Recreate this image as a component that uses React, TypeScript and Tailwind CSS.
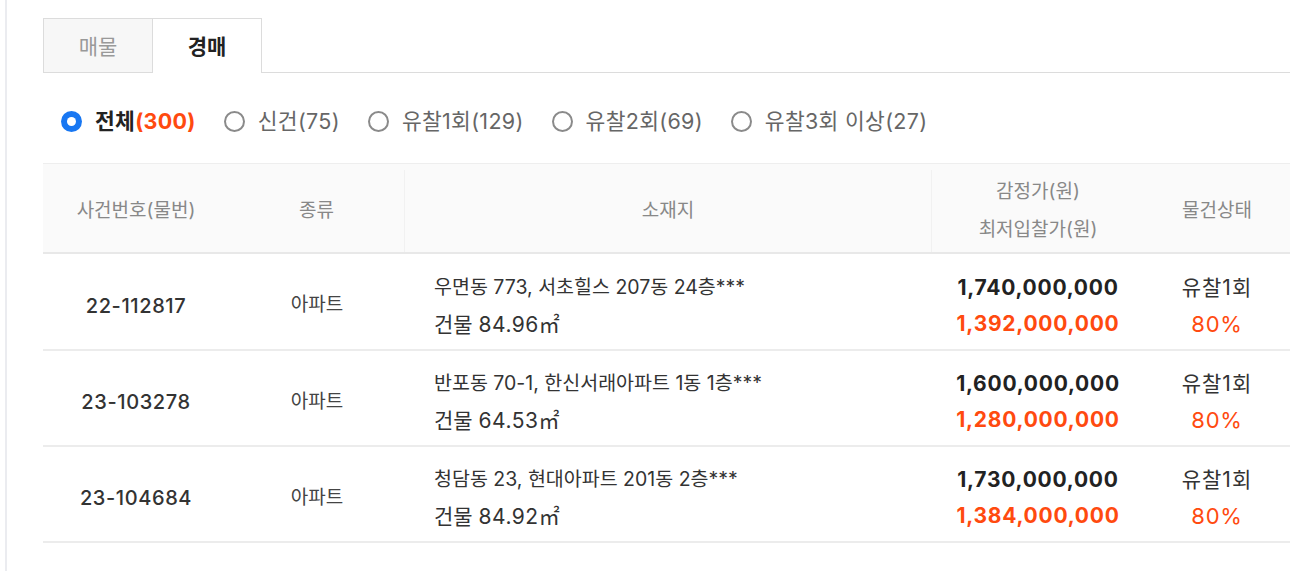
const font = "font-['Inter','Noto_Sans_CJK_KR',sans-serif]";

const filters = [
  { label: '전체', count: 300, active: true },
  { label: '신건', count: 75 },
  { label: '유찰1회', count: 129 },
  { label: '유찰2회', count: 69 },
  { label: '유찰3회 이상', count: 27 },
];

const rows = [
  {
    no: '22-112817',
    kind: '아파트',
    addr: '우면동 773, 서초힐스 207동 24층***',
    area: '84.96',
    appraisal: '1,740,000,000',
    minimum: '1,392,000,000',
    status: '유찰1회',
    rate: '80%',
  },
  {
    no: '23-103278',
    kind: '아파트',
    addr: '반포동 70-1, 한신서래아파트 1동 1층***',
    area: '64.53',
    appraisal: '1,600,000,000',
    minimum: '1,280,000,000',
    status: '유찰1회',
    rate: '80%',
  },
  {
    no: '23-104684',
    kind: '아파트',
    addr: '청담동 23, 현대아파트 201동 2층***',
    area: '84.92',
    appraisal: '1,730,000,000',
    minimum: '1,384,000,000',
    status: '유찰1회',
    rate: '80%',
  },
];

const Radio = ({ active }: { active?: boolean }) =>
  active ? (
    <span className="w-[21px] h-[21px] rounded-full bg-[#1877f2] flex items-center justify-center">
      <span className="w-[9px] h-[9px] rounded-full bg-white" />
    </span>
  ) : (
    <span className="w-[21px] h-[21px] rounded-full border-2 border-[#8a8a8a]" />
  );

export default function App() {
  return (
    <div className={`min-h-screen bg-white flex ${font}`}>
      <div className="ml-[5px] border-l-2 border-[#ebecf0] pl-[36px] pt-[18px] flex-1">
        {/* tabs */}
        <div className="flex h-[55px]">
          <div className="w-[110px] bg-[#f7f7f7] border border-[#dcdcdc] flex items-center justify-center pt-[2px] text-[21px] text-[#999]">
            매물
          </div>
          <div className="w-[109px] bg-white border-t border-r border-[#dcdcdc] flex items-center justify-center pt-[2px] text-[21px] font-bold text-[#222]">
            경매
          </div>
          <div className="flex-1 border-b border-[#dcdcdc]" />
        </div>

        {/* filters */}
        <div className="flex items-center h-[90px] pl-[18px] pt-[7px] gap-[28px]">
          {filters.map((f) => (
            <div key={f.label} className="flex items-center gap-[13px]">
              <Radio active={f.active} />
              <span
                className={`text-[21.5px] tracking-[0.3px] ${f.active ? 'font-bold text-[#222]' : 'text-[#666]'}`}
              >
                {f.label}
                <span className={f.active ? 'text-[#ff4a0f]' : ''}>({f.count})</span>
              </span>
            </div>
          ))}
        </div>

        {/* table */}
        <div className="border-t border-[#eeeeee]">
          <div className="flex h-[90px] pt-[6px] bg-[#fafafa] border-b-2 border-[#e8e8e8] text-[19px] text-[#888]">
            <div className="w-[186px] flex items-center justify-center">사건번호(물번)</div>
            <div className="w-[176px] flex items-center justify-center border-r border-[#f1f1f1]">종류</div>
            <div className="w-[527px] flex items-center justify-center border-r border-[#f1f1f1]">소재지</div>
            <div className="w-[212px] flex flex-col items-center justify-center gap-[10px] leading-[28px]">
              <span>감정가(원)</span>
              <span>최저입찰가(원)</span>
            </div>
            <div className="flex-1 flex items-center justify-center">물건상태</div>
          </div>

          {rows.map((r, i) => (
            <div
              key={r.no}
              className={`flex ${i === 0 ? 'h-[97px]' : 'h-[96px]'} pt-[8px] border-b-2 border-[#ececec]`}
            >
              <div className="w-[186px] flex items-center justify-center text-[20px] tracking-[0.6px] font-medium text-[#333]">
                {r.no}
              </div>
              <div className="w-[176px] flex items-center justify-center text-[19px] text-[#444]">
                {r.kind}
              </div>
              <div className="w-[527px] flex flex-col justify-center pl-[29px] gap-[8px] leading-[29px] text-[19.5px] text-[#333]">
                <span>{r.addr}</span>
                <span className="text-[21px]">
                  건물 <span className="tracking-[0.5px]">{r.area}</span>㎡
                </span>
              </div>
              <div className="w-[212px] flex flex-col items-center justify-center gap-[8px] leading-[28px] text-[21px] tracking-[0.75px] font-bold">
                <span className="text-[#222]">{r.appraisal}</span>
                <span className="text-[#ff4a0f]">{r.minimum}</span>
              </div>
              <div className="flex-1 flex flex-col items-center justify-center gap-[8px] leading-[28px] text-[21px]">
                <span className="text-[#333] tracking-[1px]">{r.status}</span>
                <span className="text-[#ff4a0f] text-[22px] tracking-[0.8px]">{r.rate}</span>
              </div>
            </div>
          ))}
        </div>
      </div>
    </div>
  );
}
